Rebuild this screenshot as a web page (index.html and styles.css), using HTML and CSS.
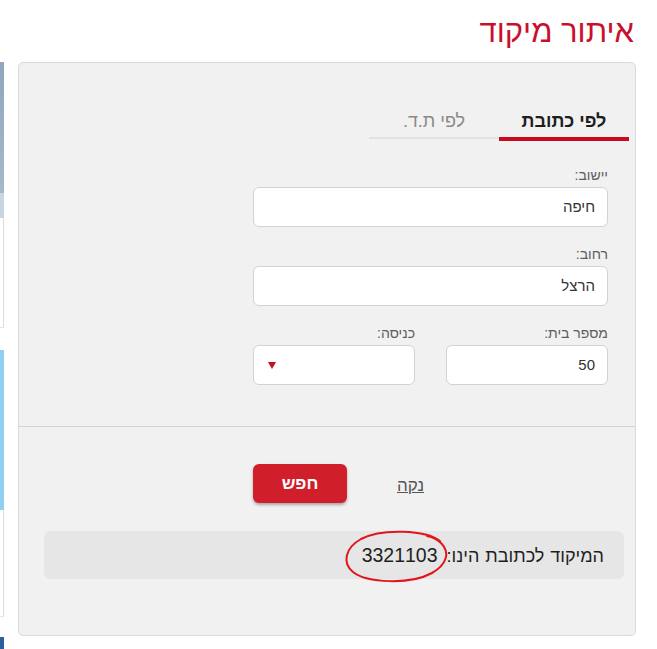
FILE: index.html
```html
<!DOCTYPE html>
<html lang="he">
<head>
<meta charset="utf-8">
<title>איתור מיקוד</title>
<link rel="stylesheet" href="styles.css">
</head>
<body>
<div class="page">
  <div class="strip">
    <div class="seg seg-a"></div>
    <div class="seg seg-b"></div>
    <div class="seg seg-c"></div>
    <div class="seg seg-gap1"></div>
    <div class="seg seg-d"></div>
    <div class="seg seg-e"></div>
    <div class="seg seg-gap2"></div>
    <div class="seg seg-f"></div>
  </div>
  <div class="main">
    <h1 class="title">איתור מיקוד</h1>
    <div class="card">
      <div class="tabs">
        <div class="tab tab-active">לפי כתובת</div>
        <div class="tab tab-inactive">לפי ת.ד.</div>
      </div>
      <div class="form">
        <div class="field">
          <div class="label">יישוב:</div>
          <div class="input">חיפה</div>
        </div>
        <div class="field">
          <div class="label">רחוב:</div>
          <div class="input">הרצל</div>
        </div>
        <div class="field row">
          <div class="col">
            <div class="label">מספר בית:</div>
            <div class="input">50</div>
          </div>
          <div class="col">
            <div class="label">כניסה:</div>
            <div class="input select"><span class="caret"></span></div>
          </div>
        </div>
      </div>
      <div class="actions">
        <div class="actions-row">
          <button class="btn">חפש</button>
          <span class="clear">נקה</span>
        </div>
        <div class="result">
          <span class="result-text">המיקוד לכתובת הינו:</span> <span class="result-code">3321103</span>
          <svg class="circle" width="112" height="58" viewBox="0 0 112 58">
            <path d="M 100 13 C 86 2, 42 0, 21 11 C 5 20, 2 35, 13 44 C 27 55, 70 57, 92 45 C 106 37, 111 25, 101 15 C 97 11, 92 9, 87 8" fill="none" stroke="#e3141c" stroke-width="2" stroke-linecap="round"/>
          </svg>
        </div>
      </div>
    </div>
  </div>
</div>
</body>
</html>
```

FILE: styles.css
```css
html, body {
  margin: 0;
  padding: 0;
  background: #ffffff;
}

body {
  font-family: "Liberation Sans", "DejaVu Sans", Arial, sans-serif;
}

.page {
  display: flex;
  direction: ltr;
  width: 657px;
  height: 649px;
  overflow: hidden;
}

.strip {
  width: 4px;
  flex: none;
  display: flex;
  flex-direction: column;
  padding-top: 62px;
}

.seg { flex: none; box-sizing: border-box; }
.seg-a { height: 131px; background: linear-gradient(#8fa6bc, #a6b9cb); }
.seg-b { height: 25px; background: #c6d6e2; }
.seg-c { height: 110px; background: #fff; border-right: 1px solid #dcdcdc; border-bottom: 1px solid #e4e4e4; }
.seg-gap1 { height: 22px; }
.seg-d { height: 160px; background: #8fd0f2; }
.seg-e { height: 107px; background: #fff; border-right: 1px solid #dcdcdc; border-bottom: 1px solid #e4e4e4; }
.seg-gap2 { height: 20px; }
.seg-f { height: 12px; background: #2d5e9e; }

.main {
  flex: 1;
  margin-left: 14px;
  margin-right: 21px;
  direction: rtl;
}

.title {
  margin: 14px 2px 12px 0;
  font-size: 31px;
  line-height: 36px;
  font-weight: normal;
  color: #c8102e;
}

.card {
  border: 1px solid #dadada;
  border-radius: 5px;
  background: #f1f1f1;
  height: 574px;
  box-sizing: border-box;
}

.tabs {
  display: flex;
  align-items: flex-start;
  padding-top: 47px;
  margin-right: 6px;
}

.tab {
  width: 130px;
  text-align: center;
  font-size: 18px;
  line-height: 22px;
  padding-bottom: 5px;
}

.tab-active {
  font-weight: bold;
  color: #1e1e1e;
  border-bottom: 4px solid #c60c1e;
}

.tab-inactive {
  color: #8a8a8a;
  border-bottom: 2px solid #e2e2e2;
}

.form {
  width: 355px;
  margin-right: 27px;
  padding-top: 26px;
  padding-bottom: 41px;
}

.field + .field { margin-top: 19px; }

.label {
  font-size: 14px;
  line-height: 17px;
  color: #5e5e5e;
  margin-bottom: 3px;
}

.input {
  height: 40px;
  box-sizing: border-box;
  border: 1px solid #d2d2d2;
  border-radius: 6px;
  background: #fff;
  padding: 0 12px;
  font-size: 15px;
  line-height: 38px;
  color: #333;
}

.row {
  display: flex;
  gap: 31px;
}

.col { flex: 1; }

.select {
  display: flex;
  align-items: center;
  justify-content: flex-end;
  padding-left: 14px;
}

.caret {
  width: 0;
  height: 0;
  border-left: 4px solid transparent;
  border-right: 4px solid transparent;
  border-top: 7px solid #c60c1e;
}

.actions {
  border-top: 1px solid #d2d2d2;
  padding-top: 37px;
}

.actions-row {
  direction: ltr;
  display: flex;
  align-items: center;
  gap: 50px;
  padding-left: 234px;
}

.btn {
  width: 94px;
  height: 39px;
  border: none;
  border-radius: 6px;
  background: #d01e2a;
  color: #fff;
  font-family: "Liberation Sans", "DejaVu Sans", Arial, sans-serif;
  font-size: 17px;
  font-weight: bold;
  box-shadow: 0 2px 3px rgba(0, 0, 0, 0.3);
  padding: 0;
}

.clear {
  direction: rtl;
  font-size: 17px;
  color: #555;
  text-decoration: underline;
  padding-top: 4px;
}

.result {
  position: relative;
  margin: 28px 11px 0 25px;
  height: 48px;
  border-radius: 6px;
  background: #e6e6e6;
  padding-right: 20px;
  font-size: 18px;
  line-height: 48px;
  color: #1e1e1e;
  word-spacing: 1px;
}

.result-code {
  font-size: 19.5px;
  margin-right: 3px;
}

.circle {
  position: absolute;
  left: 296px;
  top: -3px;
  overflow: visible;
}
```
